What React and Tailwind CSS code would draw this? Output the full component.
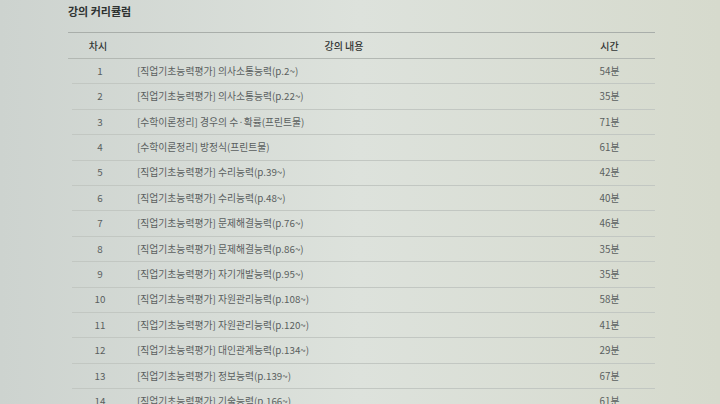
import React from 'react';

const rows = [
  ['1', '[직업기초능력평가] 의사소통능력(p.2~)', '54분'],
  ['2', '[직업기초능력평가] 의사소통능력(p.22~)', '35분'],
  ['3', '[수학이론정리] 경우의 수·확률(프린트물)', '71분'],
  ['4', '[수학이론정리] 방정식(프린트물)', '61분'],
  ['5', '[직업기초능력평가] 수리능력(p.39~)', '42분'],
  ['6', '[직업기초능력평가] 수리능력(p.48~)', '40분'],
  ['7', '[직업기초능력평가] 문제해결능력(p.76~)', '46분'],
  ['8', '[직업기초능력평가] 문제해결능력(p.86~)', '35분'],
  ['9', '[직업기초능력평가] 자기개발능력(p.95~)', '35분'],
  ['10', '[직업기초능력평가] 자원관리능력(p.108~)', '58분'],
  ['11', '[직업기초능력평가] 자원관리능력(p.120~)', '41분'],
  ['12', '[직업기초능력평가] 대인관계능력(p.134~)', '29분'],
  ['13', '[직업기초능력평가] 정보능력(p.139~)', '67분'],
  ['14', '[직업기초능력평가] 기술능력(p.166~)', '61분'],
];

export default function App() {
  return (
    <div
      className="w-[720px] h-[404px] overflow-hidden bg-linear-to-r from-[#cdd3cf] via-[#dde2dc] to-[#d6dacd] text-[#5a5f5f]"
      style={{ fontFamily: '"Noto Sans CJK KR", "Noto Sans", sans-serif' }}
    >
      <div className="pl-[68px] pt-[3px]">
        <h2 className="text-[11px] font-bold text-[#2e3231] leading-[16px]">강의 커리큘럼</h2>

        <div className="mt-[13px] w-[587px] border-t border-[#a9aeaa]">
          {/* Header */}
          <div className="flex h-[26px] items-center border-b border-[#b3b8b3] text-[10px] font-medium text-[#333736]">
            <div className="w-[60px] text-center">차시</div>
            <div className="flex-1 text-center">강의 내용</div>
            <div className="w-[95px] pl-[4px] text-center">시간</div>
          </div>

          {/* Body */}
          {rows.map(([no, title, time]) => (
            <div
              key={no}
              className="ml-[4px] flex h-[25.4px] items-center border-b border-[#c2c7c2] text-[9.8px]"
            >
              <div className="w-[56px] text-center">{no}</div>
              <div className="flex-1 pl-[9px]">{title}</div>
              <div className="w-[95px] pl-[4px] text-center">{time}</div>
            </div>
          ))}
        </div>
      </div>
    </div>
  );
}
